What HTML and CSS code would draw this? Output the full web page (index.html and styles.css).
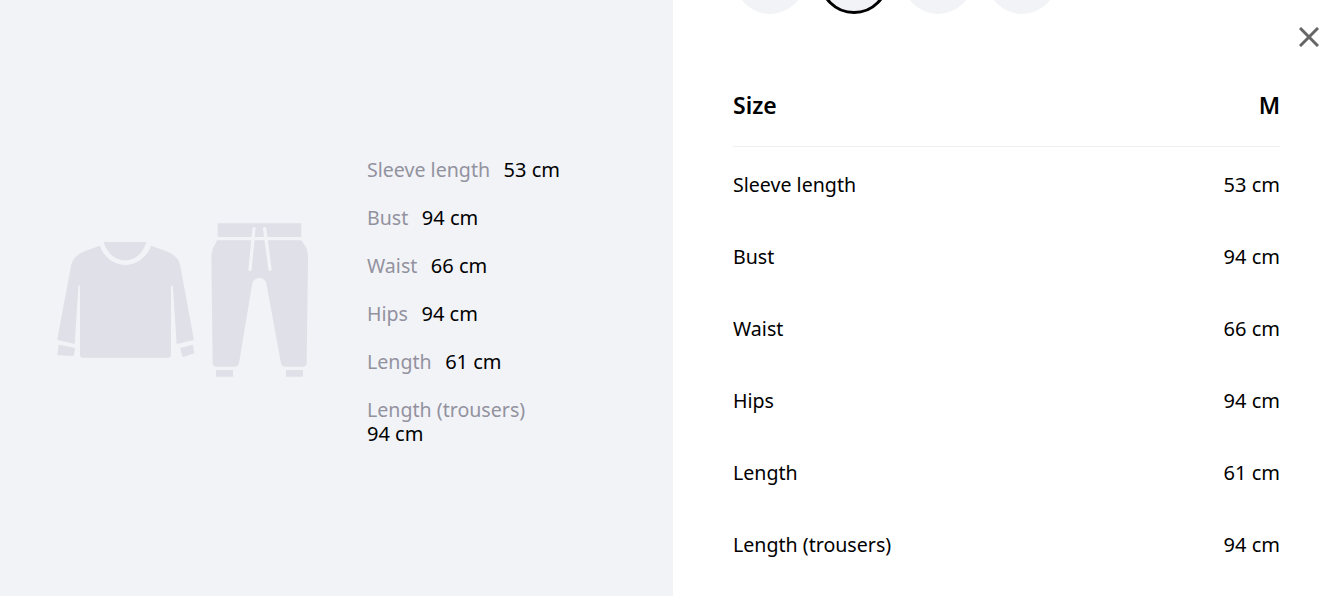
FILE: index.html
```html
<!DOCTYPE html>
<html lang="en">
<head>
<meta charset="utf-8">
<title>Size guide</title>
<link rel="stylesheet" href="styles.css">
</head>
<body>
<main class="modal">
  <section class="preview">
    <svg class="garment" viewBox="0 0 870 540" aria-hidden="true">
      <path class="fill" d="M180 107C155 116 130 124 118 132C104 141 96 152 93 168L52 386Q52 390 56 391L104 402L115 232Q115 226 118 226Q120 226 120 232L120 436Q120 443 127 443L386 443Q393 443 393 436L393 232Q393 226 396 226Q398 226 399 232L410 402L458 391Q462 390 461 386L421 168C418 152 410 141 396 132C384 124 358 116 333 107C322 140 290 165 256 165C222 165 190 140 180 107Z"/>
      <path class="fill" d="M192 96H318V100C308 130 284 151 255 151C226 151 202 130 192 100Z"/>
      <path class="fill" d="M56 404L106 414L101 438L52 436ZM420 414L458 404L463 430L428 442Z"/>
      <path class="fill" d="M533 40H784V81H533Z"/>
      <path class="fill" d="M532 91H780Q786 91 789 98L798 112Q804 125 804 140L800 460Q799 470 790 470L735 470Q725 470 723 460L680 225Q676 204 658 204Q640 204 636 225L597 460Q595 470 585 470L527 470Q518 470 518 460L514 140Q514 125 520 112L528 98Q530 91 532 91Z"/>
      <path class="string" d="M642 56L630 178M674 56L690 178"/>
      <path class="fill" d="M528 480H579V500H528ZM738 480H789V500H738Z"/>
    </svg>
    <ul class="measures">
      <li><span class="label">Sleeve length</span><span class="value">53 cm</span></li>
      <li><span class="label">Bust</span><span class="value">94 cm</span></li>
      <li><span class="label">Waist</span><span class="value">66 cm</span></li>
      <li><span class="label">Hips</span><span class="value">94 cm</span></li>
      <li><span class="label">Length</span><span class="value">61 cm</span></li>
      <li><span class="label">Length (trousers)</span> <span class="value">94 cm</span></li>
    </ul>
  </section>
  <section class="details">
    <div class="swatches">
      <span class="swatch"></span>
      <span class="swatch selected"></span>
      <span class="swatch"></span>
      <span class="swatch"></span>
    </div>
    <div class="row head"><span>Size</span><span>M</span></div>
    <div class="row"><span class="name">Sleeve length</span><span>53 cm</span></div>
    <div class="row"><span class="name">Bust</span><span>94 cm</span></div>
    <div class="row"><span class="name">Waist</span><span>66 cm</span></div>
    <div class="row"><span class="name">Hips</span><span>94 cm</span></div>
    <div class="row"><span class="name">Length</span><span>61 cm</span></div>
    <div class="row"><span class="name">Length (trousers)</span><span>94 cm</span></div>
    <button class="close" aria-label="Close">
      <svg viewBox="0 0 20 20"><path d="M1 1L19 19M19 1L1 19"/></svg>
    </button>
  </section>
</main>
</body>
</html>
```
FILE: styles.css
```css
* { box-sizing: border-box; }
html, body { margin: 0; height: 100%; overflow: hidden; }
body { font-family: "Noto Sans", "Open Sans", sans-serif; font-size: 20px; line-height: 24px; color: #000; background: #fff; }
.modal { display: flex; height: 596px; }
.preview { width: 673px; flex: none; background: #f2f3f7; display: flex; align-items: flex-start; padding: 158px 0 0 40px; }
.garment { width: 290px; height: 180px; margin-top: 52px; flex: none; }
.fill { fill: #dfe0e8; }
.string { fill: none; stroke: #f2f3f7; stroke-width: 10; stroke-linecap: round; }
.measures { list-style: none; margin: 0 0 0 37px; padding: 0; width: 200px; display: flex; flex-direction: column; gap: 24px; }
.label { color: #92929f; margin-right: 13.5px; font-size: 19.6px; white-space: nowrap; }
.value { white-space: nowrap; }
.name { font-size: 19.6px; }
.details { position: relative; flex: 1; padding: 0 54px 0 60px; }
.swatches { display: flex; gap: 14px; margin: -56px 0 0 2px; height: 70px; }
.swatch { width: 70px; height: 70px; border-radius: 50%; background: #f2f3f7; }
.swatch.selected { border: 3px solid #000; }
.row { display: flex; justify-content: space-between; align-items: center; height: 72px; }
.head { height: 81px; margin-top: 52px; margin-bottom: 2px; padding-bottom: 2px; font-weight: 600; font-size: 23px; border-bottom: 1px solid #f0f0f3; }
.close { position: absolute; top: 27px; right: 15px; width: 20px; height: 20px; padding: 0; border: 0; background: none; }
.close svg { display: block; width: 20px; height: 20px; fill: none; stroke: #666; stroke-width: 3; }
```
